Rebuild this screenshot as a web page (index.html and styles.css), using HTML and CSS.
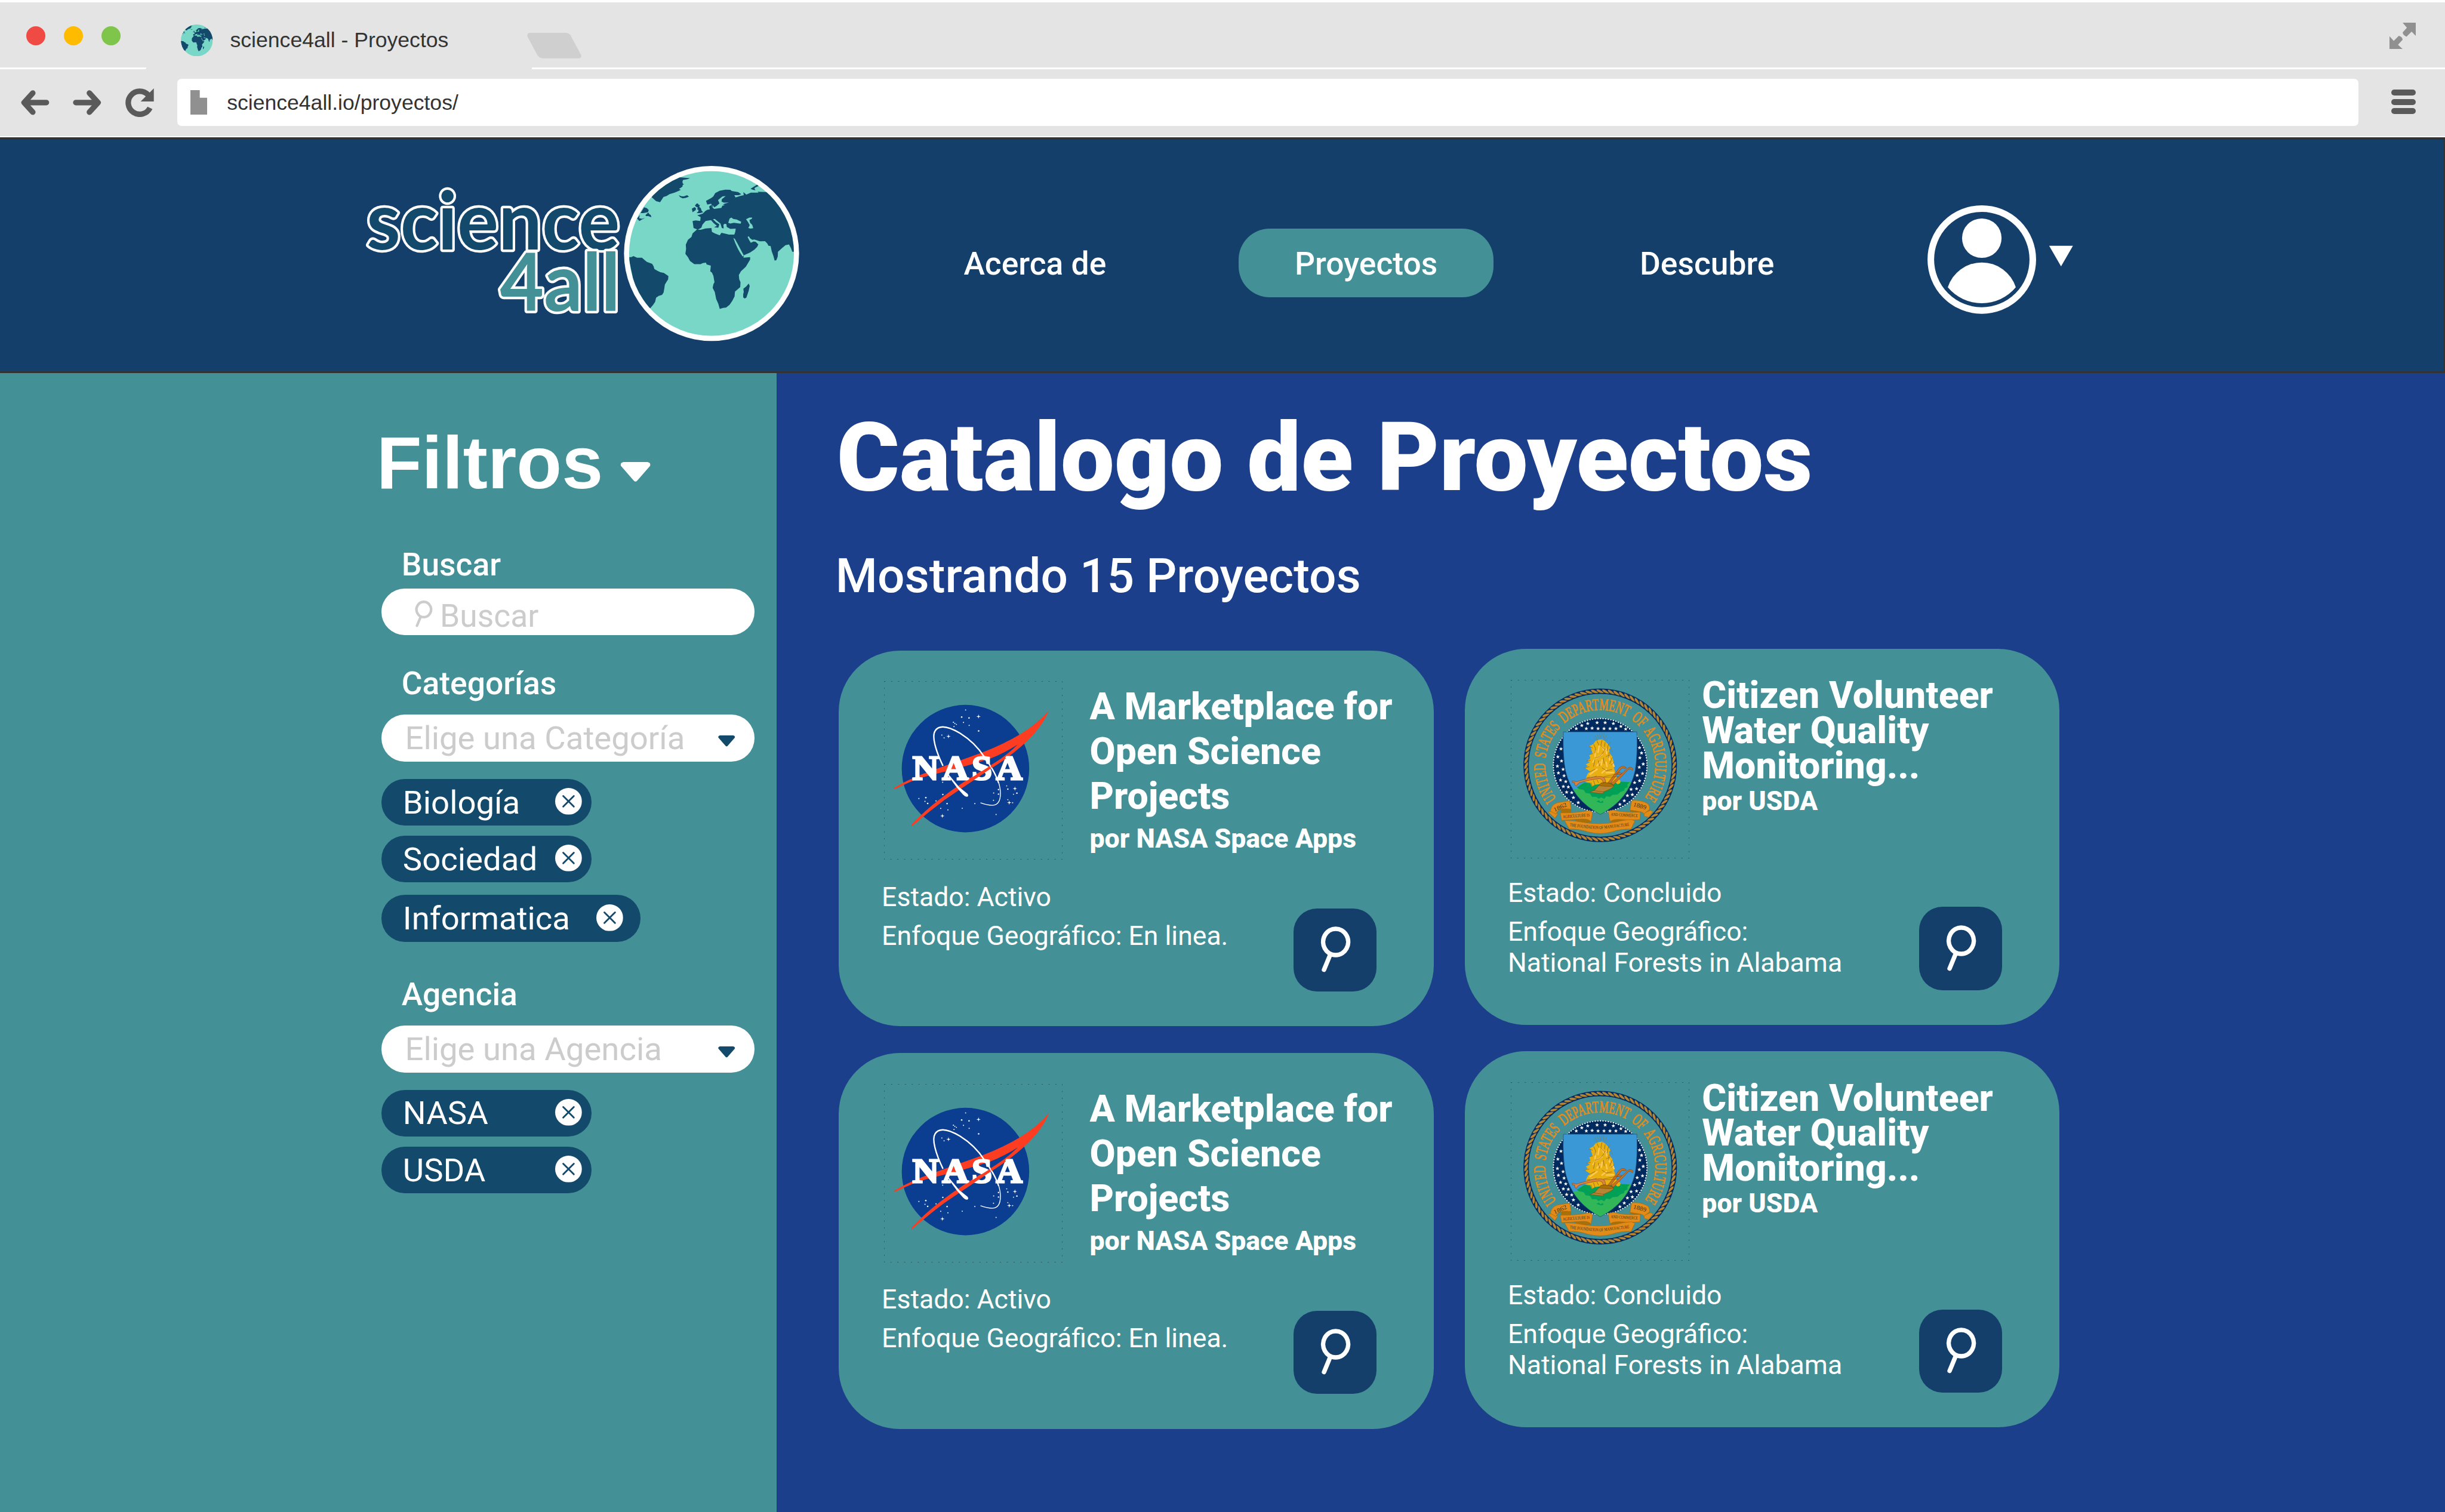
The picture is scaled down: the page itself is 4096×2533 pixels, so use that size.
FILE: index.html
```html
<!DOCTYPE html>
<html lang="es">
<head>
<meta charset="utf-8">
<title>science4all - Proyectos</title>
<link rel="stylesheet" href="styles.css">
</head>
<body>

<svg class="defs" aria-hidden="true">
  <defs>
    <clipPath id="shield-clip"><path d="M417 426H936Q942 590 924 700Q880 905 678 1009Q478 905 432 700Q411 590 417 426Z"/></clipPath>
    <clipPath id="globe-clip"><circle cx="642" cy="642" r="583"/></clipPath>
    <path id="usda-arc" d="M368 898A389 389 0 1 1 992 888" fill="none"/>
    <path id="usda-foot" d="M462 1092Q570 1108 677 1112Q780 1102 888 1088" fill="none"/>
    <path id="strand" d="M-27 -12C-16 -19 8 -8 27 12C14 17 -12 12 -24 -3Z"/>
    <path id="star" d="M0 -14L3.7 -4.6L13.6 -4.2L5.9 2L8.5 11.6L0 6.1L-8.5 11.6L-5.9 2L-13.6 -4.2L-3.7 -4.6Z"/>
    <path id="glint" d="M0 -16L2.5 -4.500L5 -2.500L16 0L5 2.500L2.500 5L0 16L-2.500 5L-5 2.500L-16 0L-5 -2.500L-2.500 -4.500Z"/>
  </defs>
</svg>
<svg class="symbols" aria-hidden="true">
  <symbol id="globe" viewBox="59 59 1166 1166">
    <circle cx="642" cy="642" r="583" fill="#79d7c8"/>
    <g clip-path="url(#globe-clip)" fill="#13496b">
      <path d="M215 240Q300 150 415 103L490 110L470 117L440 122L436 137L440 150L448 150L438 158L436 170L412 186L425 192L408 200L380 212L345 222L325 235L302 243L290 262L278 280L250 272Z"/>
      <path d="M410 230L428 237L445 238L470 230L482 240L460 249L438 252L420 244Z"/>
      <path d="M165 315L185 322L198 335L192 350L160 357L140 357ZM175 370L195 352L203 365L212 370L217 386L195 378L178 378ZM115 395L135 370L130 392L150 397L172 390L150 402L132 412Z"/>
      <path d="M55 668L75 668L90 660L115 672L150 672L168 688L185 702L222 715L232 732L238 752L260 765L280 775L305 780L337 802L335 825L322 845L312 862L308 890L303 918L292 935L268 942L250 955L243 985L228 1007L208 1030L120 980Z"/>
      <path d="M965 155L974 165L952 175L945 182L953 195L935 192L918 185L938 172Z"/>
      <path d="M535 290L545 288L552 298L560 300L555 312L566 322L572 340L583 350L562 357L537 357L550 343L548 332L540 330L545 318L530 310L525 303ZM503 325L522 314L532 322L530 335L508 350Z"/>
      <path d="M905 855L912 872L905 905L897 930L888 955L876 960L866 953L866 930L870 915L867 892L888 875Z"/>
      <path d="M508 413L530 408L562 412L565 385L541 372L562 366L580 360L598 342L612 333L630 330L625 310L640 298L650 325L640 290L612 296L603 270L640 250L655 238L668 215L700 198L740 191L775 192L785 200L830 208L852 222L835 230L803 230L812 246L845 235L870 230L867 208L888 226L920 212L975 212L968 205L1000 207L1035 208L1300 208V630L1213 630L1204 605L1190 578L1165 583L1140 605L1112 630L1110 665L1100 690L1088 692L1080 660L1068 628L1060 590L1045 588L1035 570L1020 555L985 556L965 550L945 543L930 545L915 535L905 520L897 525L908 548L920 567L940 557L955 560L973 578L965 595L945 615L915 635L870 655L868 672L915 668L915 685L900 710L885 735L850 768L835 795L838 825L847 845L845 880L808 912L805 945L790 975L770 1005L745 1025L725 1027L700 1034L690 998L675 965L665 915L650 885L655 860L663 845L655 800L645 778L633 768L637 728L607 720L603 707L580 710L565 717L520 718L490 695L475 668L457 645L462 610L460 580L475 545L500 525L508 500L520 490L540 472L515 462Z"/>
    </g>
    <g fill="#79d7c8">
      <path d="M545 474L570 460L578 438L600 413L638 406L658 428L680 446L660 457L690 460L697 436L675 422L652 400L665 398L683 412L705 430L715 462L728 465L726 440L733 432L747 434L750 455L775 468L813 466L810 490L803 508L765 508L740 502L712 496L700 514L665 500L645 490L641 462L600 465L565 475Z"/>
      <path d="M760 425L770 395L783 388L795 398L820 402L852 418L848 431L800 425L775 430Z"/>
      <path d="M886 400L910 388L930 388L926 398L910 405L915 425L930 440L937 463L918 466L902 462L912 442L900 420Z"/>
      <path d="M650 300L660 315L675 308L698 288L688 265L705 250L720 238L742 236L715 258L713 275L730 283L765 282L735 290L722 296L736 300L718 305L712 320L660 327L650 318Z"/>
      <path d="M796 532L808 540L830 580L862 640L870 656L862 664Q825 615 796 532Z"/>
    </g>
  </symbol>

  <symbol id="nasa" viewBox="4 10 1260 1260">
    <circle cx="579" cy="628" r="450" fill="#0b3d91"/>
    <path d="M70 766Q200 690 360 635L690 517Q850 455 962 387Q1095 305 1168 216Q1125 330 993 453Q900 540 752 632L430 850Q310 940 198 1038V1024Q290 925 410 834Q560 720 740 615Q860 545 948 458Q850 520 755 557Q560 620 360 667Q230 695 82 772Z" fill="#fc3d21"/>
    <g fill="none" stroke="#fff">
      <path d="M420 608C368 500 340 400 364 362C392 318 452 326 540 378C620 428 675 488 712 546" stroke-width="10"/>
      <path d="M712 546C770 620 815 705 824 775C832 850 812 885 768 887Q730 886 685 869" stroke-width="6"/>
    </g>
    <path d="M452 672L464 674L534 758L592 804Q604 818 594 825Q578 830 562 812L520 764Z" fill="#fff"/>
    <g class="nasa-word" transform="scale(1.08 1)"><text x="190 384 577 736" y="704">NASA</text></g>
    <path d="M560 732L752 610L850 545L865 556L752 632L560 760Z" fill="#fc3d21"/>
    <path d="M727 570C772 635 800 690 812 730" fill="none" stroke="#fff" stroke-width="7"/>
    <g fill="#fff">
      <circle cx="580" cy="214" r="4"/><circle cx="552" cy="264" r="5.500"/><circle cx="604" cy="270" r="5.500"/><circle cx="494" cy="301" r="4.500"/><circle cx="504" cy="309" r="4"/><circle cx="515" cy="316" r="4"/><circle cx="498" cy="331" r="4"/><circle cx="565" cy="302" r="4"/><circle cx="605" cy="323" r="4"/><circle cx="672" cy="362" r="5.500"/><circle cx="412" cy="391" r="4"/><circle cx="428" cy="411" r="4"/>
      <circle cx="418" cy="724" r="4"/><circle cx="419" cy="811" r="5"/><circle cx="250" cy="839" r="4"/><circle cx="299" cy="833" r="5.500"/><circle cx="293" cy="859" r="4"/><circle cx="312" cy="874" r="5.500"/><circle cx="371" cy="856" r="4"/><circle cx="449" cy="875" r="5"/><circle cx="404" cy="909" r="4"/><circle cx="455" cy="919" r="4"/><circle cx="556" cy="908" r="4"/><circle cx="645" cy="875" r="4"/><circle cx="795" cy="952" r="4"/>
      <circle cx="870" cy="750" r="4"/><circle cx="878" cy="773" r="5"/><circle cx="812" cy="776" r="5"/><circle cx="778" cy="800" r="4"/><circle cx="812" cy="808" r="5"/><circle cx="777" cy="852" r="4"/><circle cx="942" cy="801" r="5.500"/><circle cx="918" cy="809" r="4"/><circle cx="878" cy="847" r="4"/><circle cx="912" cy="869" r="4"/>
      <use href="#glint" x="671" y="260"/><use href="#glint" x="459" y="400"/><use href="#glint" x="928" y="769"/><use href="#glint" x="888" y="868"/><use href="#glint" x="416" y="962"/>
    </g>
  </symbol>

  <symbol id="usda" viewBox="46 59 1260 1260">
    <circle cx="677" cy="662" r="523" stroke="#002a5e" stroke-width="38" fill="none"/>
    <g id="rope" fill="#b68433" stroke="#002a5e" stroke-width="2"></g>
    <g class="usda-ring">
      <text><textPath href="#usda-arc" textLength="1722" lengthAdjust="spacingAndGlyphs">UNITED STATES DEPARTMENT OF AGRICULTURE</textPath></text>
    </g>
    <circle cx="677" cy="662" r="331" fill="#002a5e"/>
    <circle cx="677" cy="662" r="331" fill="none" stroke="#002a5e" stroke-width="13" stroke-linecap="round" pathLength="1120" stroke-dasharray="0 10"/>
    <circle cx="677" cy="662" r="331" fill="none" stroke="#fff" stroke-width="10" stroke-linecap="round" pathLength="1120" stroke-dasharray="0 10"/>
    <g fill="#fff">
      <use href="#star" x="508" y="403"/><use href="#star" x="547" y="381"/><use href="#star" x="589" y="367"/><use href="#star" x="655" y="361"/><use href="#star" x="712" y="361"/><use href="#star" x="770" y="367"/><use href="#star" x="823" y="387"/><use href="#star" x="857" y="406"/><use href="#star" x="579" y="403"/><use href="#star" x="620" y="400"/><use href="#star" x="662" y="403"/><use href="#star" x="704" y="403"/><use href="#star" x="746" y="403"/><use href="#star" x="788" y="403"/>
      <use href="#star" x="400" y="546"/><use href="#star" x="378" y="602"/><use href="#star" x="404" y="631"/><use href="#star" x="375" y="668"/><use href="#star" x="415" y="690"/><use href="#star" x="382" y="716"/><use href="#star" x="422" y="736"/><use href="#star" x="397" y="766"/><use href="#star" x="434" y="777"/><use href="#star" x="417" y="812"/><use href="#star" x="452" y="815"/><use href="#star" x="440" y="852"/><use href="#star" x="476" y="855"/><use href="#star" x="488" y="890"/><use href="#star" x="522" y="925"/>
      <use href="#star" x="955" y="538"/><use href="#star" x="969" y="575"/><use href="#star" x="957" y="609"/><use href="#star" x="981" y="653"/><use href="#star" x="953" y="676"/><use href="#star" x="976" y="720"/><use href="#star" x="938" y="733"/><use href="#star" x="955" y="771"/><use href="#star" x="920" y="784"/><use href="#star" x="934" y="827"/><use href="#star" x="895" y="832"/><use href="#star" x="904" y="869"/><use href="#star" x="869" y="876"/><use href="#star" x="847" y="912"/><use href="#star" x="816" y="938"/>
    </g>
    <g clip-path="url(#shield-clip)">
      <rect x="410" y="420" width="530" height="600" fill="#3a98d6"/>
      <path d="M480 835L530 822L545 790L800 800L890 775V1020H480Z" fill="#31b758"/>
      <path d="M540 800L570 782L600 790L640 775L740 790L830 778L885 782L868 800L872 815L850 825L845 842L820 850L800 868L765 870L745 885L720 880L705 900L685 888L665 898L650 885L620 885L605 862L575 858L560 835L525 828L512 818Z" fill="#00a057"/>
      <path d="M650 918L668 908L680 922L695 910L700 925L680 928Z" fill="#00a057"/>
    </g>
    <path d="M417 426H936Q942 590 924 700Q880 905 678 1009Q478 905 432 700Q411 590 417 426Z" fill="none" stroke="#1c4f7c" stroke-width="3"/>
    <path d="M598 528L628 512L645 490L668 482L690 478L712 492L735 515L750 540L740 550L745 580L762 600L772 640L765 650L780 700L795 750L820 770L818 788L800 795L780 780L640 800L618 812L606 785L570 780L578 745L590 720L605 705L568 680L590 668L575 655L605 640L585 632L608 612L600 590L622 575L610 535Z" fill="#e9b012"/>
    <g fill="none" stroke="#ffc95c" stroke-width="10" stroke-linecap="round">
      <path d="M670 525L662 570M690 530L705 560M645 560L640 600M720 545L722 580M650 610L690 585M625 640L640 620M685 660L690 625M735 600L745 625M655 690L605 725M720 640L725 670M765 645L775 670M640 740L610 745M690 715L720 690M720 715L770 712M675 640L655 665"/>
    </g>
    <g fill="none" stroke="#7d5c18" stroke-width="3" stroke-linecap="round">
      <path d="M632 515L645 545L640 575M655 492L668 520M690 485L682 520L700 545M712 500L708 530M735 515L725 560M600 528L622 540M645 610Q690 600 712 545M605 585L625 580M583 632L608 625M568 680L600 672M600 710L640 690M640 620L630 670M665 630L672 665M700 610L705 650M740 570L735 610M760 610L745 650M775 640L755 660M690 680L720 700L760 692M580 750L650 738M630 770L640 800M655 765L665 785M612 785L620 808M720 600L745 590"/>
      <path d="M690 432L688 470M672 440L680 470M655 445L668 470M640 452L658 478M705 435L700 468M722 448L708 478M635 468L655 485M735 465L715 488M745 500L735 515M750 535L765 570" stroke="#8d7c2c" stroke-dasharray="6 4"/>
    </g>
    <g stroke="#7a430d" stroke-width="2.500" stroke-linejoin="round">
      <path d="M732 785L812 680Q840 655 862 680L850 684Q838 674 822 690L750 790Z" fill="#cb7120"/>
      <path d="M755 790L865 688Q892 662 910 688L904 698Q886 678 872 694L772 800Z" fill="#cb7120"/>
      <path d="M800 712L830 718L822 728L792 722Z" fill="#cb7120"/>
      <path d="M480 772L510 778L600 752Q660 738 690 742Q715 750 715 782L697 785Q695 760 672 756Q610 762 530 785Q518 792 508 808L497 800V785L480 782Z" fill="#d98440"/>
      <path d="M700 742L805 722M700 748L805 742" fill="none"/>
      <path d="M682 788Q735 775 775 808Q760 828 700 850V862L605 852L640 836Z" fill="#b68433"/>
      <path d="M682 788Q735 775 775 808Q735 815 665 805Z" fill="#a87008"/>
      <path d="M628 840L700 850" fill="none"/>
    </g>
    <g stroke="#a86a0b" stroke-width="3" stroke-linejoin="round">
      <path d="M308 990L350 988L378 1005L358 1035Z" fill="#e38b19"/>
      <path d="M985 1000L1032 980L1050 988L1020 1028L990 1022Z" fill="#e38b19"/>
      <path d="M400 975L470 970L470 1000L402 1010ZM960 975L890 968V985L958 1000Z" fill="#a87008"/>
      <path d="M325 985Q335 925 400 922L462 912L472 972Q420 965 395 975Q370 985 365 1008Z" fill="#e38b19"/>
      <path d="M900 910Q960 905 1008 930Q1030 945 1025 975L985 1005Q980 990 950 988L887 978Z" fill="#e38b19"/>
      <path d="M500 1045L605 1040L612 1062L520 1068ZM850 1040L748 1038V1058L820 1068Z" fill="#a87008"/>
      <path d="M395 998Q500 1000 595 982Q620 985 622 1000L612 1062Q600 1038 540 1042L405 1050Z" fill="#e38b19"/>
      <path d="M735 985L770 978Q850 1000 960 992L958 1045Q880 1050 830 1045Q770 1040 748 1058Q738 1030 735 985Z" fill="#e38b19"/>
      <path d="M425 1052Q490 1050 560 1065Q677 1085 790 1062Q860 1045 900 1045L922 1055L895 1112Q820 1110 760 1132Q677 1155 590 1132Q520 1108 458 1112Z" fill="#e38b19"/>
    </g>
    <g class="usda-motto">
      <text class="year" transform="translate(355 990) rotate(-24)" textLength="98" lengthAdjust="spacingAndGlyphs">1862</text>
      <text class="year" transform="translate(908 950) rotate(15)" textLength="94" lengthAdjust="spacingAndGlyphs">1889</text>
      <text transform="translate(414 1036) rotate(-4)" textLength="190" lengthAdjust="spacingAndGlyphs">AGRICULTURE IS</text>
      <text transform="translate(752 1018) rotate(3)" textLength="190" lengthAdjust="spacingAndGlyphs">AND COMMERCE</text>
      <text><textPath href="#usda-foot" textLength="424" lengthAdjust="spacingAndGlyphs">THE FOUNDATION OF MANUFACTURE</textPath></text>
    </g>
  </symbol>

  <symbol id="lens" viewBox="0 0 72 110">
    <path d="M36 5.500A29.500 31 0 1 1 35.900 5.500ZM23 67L8.500 102" fill="none" stroke="currentColor" stroke-width="10.500" stroke-linecap="round"/>
  </symbol>
  <symbol id="caret" viewBox="0 0 116 76">
    <path d="M12 0H104Q118 3 114 15L66 70Q58 80 50 70L2 15Q-2 3 12 0Z" fill="currentColor"/>
  </symbol>
  <symbol id="close" viewBox="0 0 63 63">
    <circle cx="31.500" cy="31.500" r="31.500" fill="#fff"/>
    <path d="M19 19L44 44M44 19L19 44" stroke="#13496b" stroke-width="4" stroke-linecap="round"/>
  </symbol>
</svg>

<div class="browser">
  <div class="tabs">
    <i class="dot red"></i><i class="dot amber"></i><i class="dot green"></i>
    <svg class="favicon"><use href="#globe"/></svg>
    <span class="tab-title">science4all - Proyectos</span>
    <svg class="new-tab" viewBox="0 0 128 60"><path d="M6 0H92Q101 1 104 9L127 52Q129 59 122 60H36Q28 59 24 52L1 9Q-1 1 6 0Z" fill="#cfcfcf"/></svg>
    <svg class="expand" viewBox="0 0 62 62" fill="#909090"><path d="M31 0H62V31L52 21L40 33Q32 30 31 23L41 12Z"/><path d="M31 62H0V32L10 43L22 31Q30 33 31 40L20 52Z"/></svg>
  </div>
  <div class="edge"><i class="edge-left"></i><i class="edge-right"></i></div>
  <div class="toolbar">
    <svg class="nav-icon" viewBox="0 0 67 67" fill="none" stroke="#5a5a5a" stroke-width="13" stroke-linecap="round" stroke-linejoin="round"><path d="M60 33.500H10M28 11L7.500 33.500L28 56"/></svg>
    <svg class="nav-icon forward" viewBox="0 0 67 67" fill="none" stroke="#5a5a5a" stroke-width="13" stroke-linecap="round" stroke-linejoin="round"><path d="M7 33.500H57M39 11L59.500 33.500L39 56"/></svg>
    <svg class="nav-icon reload" viewBox="0 0 67 67"><path d="M58 46A27 27 0 1 1 54 16" fill="none" stroke="#5a5a5a" stroke-width="13"/><path d="M67 0V31H36Z" fill="#5a5a5a"/></svg>
    <div class="address">
      <svg class="page-icon" viewBox="0 0 40 58"><path d="M0 0H22V18H40V58H0Z" fill="#909090"/></svg>
      <span>science4all.io/proyectos/</span>
    </div>
    <div class="menu"><i></i><i></i><i></i></div>
  </div>
</div>

<header class="site-header">
  <svg class="logo" viewBox="855 385 1030 435">
    <text class="logo-science" x="862" y="589" textLength="596" lengthAdjust="spacingAndGlyphs">science</text>
    <text class="logo-4all" x="1176" y="734" textLength="283" lengthAdjust="spacingAndGlyphs">4all</text>
    <circle cx="1674" cy="598" r="206" fill="#fff"/>
    <use href="#globe" x="1480" y="404" width="388" height="388"/>
  </svg>
  <nav class="site-nav">
    <a class="nav-about">Acerca de</a>
    <a class="nav-projects">Proyectos</a>
    <a class="nav-discover">Descubre</a>
  </nav>
  <svg class="user" viewBox="4530 480 350 265" fill="#fff">
    <circle cx="4663.500" cy="611.800" r="120" fill="none" stroke="#fff" stroke-width="15.500"/>
    <circle cx="4663.500" cy="561.500" r="46.500"/>
    <path d="M4583.500 677A84 84 0 0 1 4743.500 677A104 104 0 0 1 4583.500 677Z"/>
    <path d="M4822 579.500H4878L4850 628Z"/>
  </svg>
</header>

<main class="page">
  <aside class="filters">
    <h2>Filtros <svg class="title-caret"><use href="#caret"/></svg></h2>
    <section class="group search">
      <h3>Buscar</h3>
      <div class="field"><svg class="field-lens"><use href="#lens"/></svg><span>Buscar</span></div>
    </section>
    <section class="group categories">
      <h3>Categorías</h3>
      <div class="field"><span>Elige una Categoría</span><svg class="caret"><use href="#caret"/></svg></div>
      <ul>
        <li>Biología<svg><use href="#close"/></svg></li>
        <li>Sociedad<svg><use href="#close"/></svg></li>
        <li class="wide">Informatica<svg><use href="#close"/></svg></li>
      </ul>
    </section>
    <section class="group agencies">
      <h3>Agencia</h3>
      <div class="field"><span>Elige una Agencia</span><svg class="caret"><use href="#caret"/></svg></div>
      <ul>
        <li>NASA<svg><use href="#close"/></svg></li>
        <li>USDA<svg><use href="#close"/></svg></li>
      </ul>
    </section>
  </aside>

  <section class="catalog">
    <h1>Catalogo de Proyectos</h1>
    <p class="count">Mostrando 15 Proyectos</p>
    <div class="columns">
      <div class="column">
        <article class="card nasa">
          <div class="top">
            <svg class="badge" viewBox="0 0 420 420"><use href="#nasa" width="420" height="420"/><rect class="frame" x=".5" y=".5" width="419" height="419"/></svg>
            <div class="heading"><h4>A Marketplace for<br>Open Science<br>Projects</h4><p>por NASA Space Apps</p></div>
          </div>
          <div class="bottom">
            <div class="details"><p>Estado: Activo</p><p class="focus">Enfoque Geográfico: En linea.</p></div>
            <a class="open"><svg><use href="#lens"/></svg></a>
          </div>
        </article>
        <article class="card nasa">
          <div class="top">
            <svg class="badge" viewBox="0 0 420 420"><use href="#nasa" width="420" height="420"/><rect class="frame" x=".5" y=".5" width="419" height="419"/></svg>
            <div class="heading"><h4>A Marketplace for<br>Open Science<br>Projects</h4><p>por NASA Space Apps</p></div>
          </div>
          <div class="bottom">
            <div class="details"><p>Estado: Activo</p><p class="focus">Enfoque Geográfico: En linea.</p></div>
            <a class="open"><svg><use href="#lens"/></svg></a>
          </div>
        </article>
      </div>
      <div class="column second">
        <article class="card usda">
          <div class="top">
            <svg class="badge" viewBox="0 0 420 420"><use href="#usda" width="420" height="420"/><rect class="frame" x=".5" y=".5" width="419" height="419"/></svg>
            <div class="heading"><h4>Citizen Volunteer<br>Water Quality<br>Monitoring...</h4><p>por USDA</p></div>
          </div>
          <div class="bottom">
            <div class="details"><p>Estado: Concluido</p><p class="focus">Enfoque Geográfico:<br>National Forests in Alabama</p></div>
            <a class="open"><svg><use href="#lens"/></svg></a>
          </div>
        </article>
        <article class="card usda">
          <div class="top">
            <svg class="badge" viewBox="0 0 420 420"><use href="#usda" width="420" height="420"/><rect class="frame" x=".5" y=".5" width="419" height="419"/></svg>
            <div class="heading"><h4>Citizen Volunteer<br>Water Quality<br>Monitoring...</h4><p>por USDA</p></div>
          </div>
          <div class="bottom">
            <div class="details"><p>Estado: Concluido</p><p class="focus">Enfoque Geográfico:<br>National Forests in Alabama</p></div>
            <a class="open"><svg><use href="#lens"/></svg></a>
          </div>
        </article>
      </div>
    </div>
  </section>
</main>
<script src="rope.js"></script>
</body>
</html>
```
FILE: styles.css
```css
/* The design grid is 57.54rem wide and scales with the window. */
html { font-size: calc(100vw / 57.54); }
*, *::before, *::after { box-sizing: border-box; }
body {
  margin: 0;
  height: 100vh;
  overflow: hidden;
  display: flex;
  flex-direction: column;
  font-family: Roboto, sans-serif;
  font-size: .75rem;
  color: #fff;
  background: #fff;
}
h1, h2, h3, h4, p, ul { margin: 0; padding: 0; font-size: inherit; font-weight: inherit; }
ul { list-style: none; }
i { display: block; }
svg { display: block; flex: none; }
.defs { position: absolute; width: 0; height: 0; }
.symbols { display: none; }

/* Browser window */
.browser { flex: none; padding-top: .05rem; height: 3.23rem; color: #333; font: .5rem/1 "Liberation Sans", Arial, sans-serif; }
.tabs { display: flex; align-items: flex-start; height: 1.54rem; padding: 0 .69rem 0 .62rem; background: #e4e4e4; }
.dot { width: .45rem; height: .45rem; border-radius: 50%; margin: .568rem .433rem 0 0; }
.red { background: #ef4b44; }
.amber { background: #ffbb00; }
.green { background: #7fc44b; }
.favicon { width: .75rem; height: .75rem; margin: .522rem 0 0 .99rem; }
.tab-title { margin: .65rem 0 0 .408rem; white-space: nowrap; }
.new-tab { width: 1.28rem; height: .6rem; margin: .72rem 0 0 1.85rem; }
.expand { width: .62rem; height: .62rem; margin: .48rem 0 0 auto; }
.edge { display: flex; justify-content: space-between; height: .04rem; background: #e4e4e4; }
.edge i { background: #fff; }
.edge-left { width: 3.44rem; border-bottom-right-radius: .04rem; }
.edge-right { width: 45.02rem; }
.toolbar { display: flex; align-items: flex-start; height: 1.58rem; background: #e4e4e4; padding: .22rem .69rem 0 .49rem; }
.nav-icon { width: .67rem; height: .67rem; margin-top: .23rem; }
.forward { margin-left: .56rem; }
.reload { margin-left: .56rem; }
.address { display: flex; align-items: flex-start; width: 51.33rem; height: 1.11rem; margin-left: .55rem; padding-left: .31rem; background: #fff; border-radius: .1rem; }
.page-icon { width: .4rem; height: .58rem; margin-top: .27rem; }
.address span { margin: .33rem 0 0 .462rem; }
.menu { width: .58rem; margin: .26rem 0 0 auto; display: grid; gap: .08rem; }
.menu i { height: .14rem; border-radius: .07rem; background: #5a5a5a; }

/* Site header */
.site-header {
  flex: none;
  display: flex;
  align-items: flex-start;
  height: 5.545rem;
  background: #143f6a;
  border: solid #333;
  border-width: .065rem .045rem .045rem 0;
}
.logo { width: 10.3rem; height: 4.35rem; margin: .555rem 0 0 8.55rem; }
.logo text { font: 700 188px Lato, sans-serif; stroke: #fff; stroke-width: 12px; stroke-linejoin: round; paint-order: stroke; }
.logo-science { fill: #13496b; }
.logo-4all { fill: #439196; }
.site-nav { display: flex; margin: 2.1rem 0 0 3.83rem; font-weight: 500; line-height: 1.567rem; }
.site-nav a { height: 1.607rem; padding-top: .04rem; white-space: nowrap; }
.nav-about { width: 6.47rem; }
.nav-projects { width: 6rem; text-align: center; border-radius: .73rem; background: #439196; }
.nav-discover { width: 6.71rem; padding-left: 3.44rem; }
.user { width: 3.5rem; height: 2.65rem; margin: 1.505rem 0 0 3.44rem; }

/* Filters */
.page { flex: 1; min-height: 0; display: flex; }
.filters { flex: none; width: 18.27rem; padding: 1.119rem 0 0 8.97rem; background: #439196; }
.filters h2 { display: flex; align-items: flex-start; gap: .4rem; margin-left: -.11rem; font: 700 1.745rem/2rem "Liberation Sans", Arial, sans-serif; }
.title-caret { width: .72rem; height: .465rem; margin-top: .986rem; }
.filters h3 { font-weight: 500; line-height: .9rem; padding-left: .48rem; }
.search { margin-top: .95rem; }
.categories { margin-top: .68rem; }
.agencies { margin-top: .786rem; }
.field {
  display: flex;
  align-items: center;
  width: 8.79rem;
  height: 1.1rem;
  margin-top: .291rem;
  padding: 0 .46rem 0 .56rem;
  border-radius: .55rem;
  background: #fff;
  color: #ccc;
  font-size: .766rem;
  line-height: .9rem;
}
.search .field { margin-top: .106rem; padding: .2rem 0 0 .79rem; font-size: .75rem; }
.field-lens { width: .42rem; height: .64rem; margin: -.1rem .175rem 0 0; }
.caret { width: .4rem; height: .265rem; margin: .13rem 0 0 auto; color: #13496b; }
.filters li {
  display: flex;
  align-items: center;
  justify-content: space-between;
  width: 4.95rem;
  height: 1.1rem;
  margin-top: .235rem;
  padding: 0 .225rem 0 .51rem;
  border-radius: .55rem;
  background: #13496b;
  font-size: .766rem;
  line-height: .88rem;
}
.filters li:first-child { margin-top: .408rem; }
.filters .wide { width: 6.11rem; margin-top: .3rem; padding-right: .41rem; }
.filters li svg { width: .63rem; height: .63rem; margin-top: -.03rem; }

/* Catalog */
.catalog { flex: 1; min-width: 0; padding: .785rem 0 0 1.47rem; background: #1c3f8b; white-space: nowrap; }
h1 { font-size: 2.254rem; font-weight: 900; line-height: 2.4rem; margin-left: -.05rem; }
.count { margin: .95rem 0 0 -.075rem; font-size: 1.127rem; font-weight: 500; line-height: 1.3rem; }
.columns { display: flex; gap: .73rem; padding-top: 1.105rem; }
.column { display: grid; gap: .63rem; align-content: start; }
.second { margin-top: -.04rem; }
.card { width: 14rem; height: 8.84rem; border-radius: 1.44rem; background: #439196; padding-top: .72rem; }
.top { display: flex; align-items: flex-start; height: 4.2rem; padding-left: 1.07rem; }
.badge { width: 4.2rem; height: 4.2rem; }
.nasa-word text { font: 700 238px "Liberation Serif", serif; fill: #fff; stroke: #fff; stroke-width: 13px; }
.usda-ring text { font: 400 118px "Liberation Serif", serif; fill: #e38b19; stroke: #e38b19; stroke-width: 4px; word-spacing: 26px; }
.usda-motto text { font-family: "Liberation Serif", serif; font-size: 31px; fill: #3a3420; }
.usda-motto .year { font-size: 42px; }
.frame { fill: none; stroke: #2b4a4c; stroke-width: 1.2; stroke-dasharray: 3 13.1; }
.heading { padding: .08rem 0 0 .635rem; }
h4 { font-size: .88rem; font-weight: 800; line-height: 1.05rem; }
.heading p { margin-top: .08rem; font-size: .627rem; font-weight: 800; line-height: .8rem; }
.bottom { display: flex; align-items: flex-start; padding-top: .49rem; }
.details { width: 10.7rem; padding-left: 1.01rem; font-size: .626rem; line-height: .8rem; }
.focus { margin-top: .14rem; line-height: .74rem; }
.open { display: flex; width: 1.95rem; height: 1.955rem; margin-top: .65rem; padding: .43rem 0 0 .63rem; border-radius: .55rem; background: #143f6a; }
.open svg { width: .72rem; height: 1.1rem; }
.usda { padding-top: .725rem; }
.usda .top { padding-left: 1.085rem; }
.usda .heading { padding: 0 0 0 .3rem; margin-top: -.035rem; }
.usda h4 { line-height: .823rem; }
.usda .heading p { margin-top: .025rem; }
.usda .bottom { padding-top: .42rem; }
.usda .details { padding-left: 1.015rem; }
.usda .open { margin-top: .725rem; }
```
FILE: rope.js
```js
// Lay the strands of the rope evenly round the seal.
const rope = document.getElementById('rope');
for (let i = 0; i < 84; i++) {
  const strand = document.createElementNS('http://www.w3.org/2000/svg', 'use');
  strand.setAttribute('href', '#strand');
  strand.setAttribute('transform', `rotate(${i * 360 / 84} 677 662) translate(677 139)`);
  rope.append(strand);
}
```
